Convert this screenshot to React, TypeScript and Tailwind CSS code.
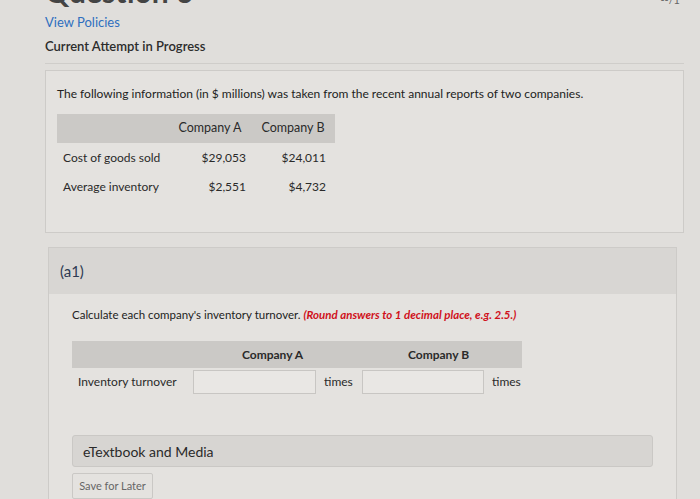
export default function App() {
  return (
    <div className="w-[700px] h-[499px] overflow-hidden bg-[#e0dedb] font-['Lato',sans-serif] text-[#333]">
      <div className="h-[7px] overflow-hidden flex justify-between pl-[45px] pr-[20px]">
        <div className="-mt-[27px] text-[30px] leading-[36px] font-bold text-[#444]">Question 6</div>
        <div className="-mt-[7px] text-[11px] leading-[14px] text-[#666]">--/1</div>
      </div>
      <div className="pl-[45px] pr-[16px]">
        <div className="mt-[7px] text-[13px] leading-[16px] text-[#2f6fbf]">View Policies</div>
        <div className="mt-[8px] text-[13px] leading-[16px] font-semibold text-[#2c2c2c]">Current Attempt in Progress</div>
        <div className="mt-[9px] border-t border-[#cfcdca]" />
        <div className="mt-[6px] h-[163px] border border-[#cdcbc8] bg-[#e4e2df] pl-[11px] pt-[15px]">
          <p className="text-[12px] leading-[16px] text-[#222]">
            The following information (in $ millions) was taken from the recent annual reports of two companies.
          </p>
          <div className="mt-[12px] w-[278px] text-[12px] text-[#2a2a2a]">
            <div className="flex h-[29px] items-center bg-[#cbc9c6] text-[12.5px]">
              <div className="w-[112px]" />
              <div className="w-[82px] text-center">Company A</div>
              <div className="w-[84px] text-center">Company B</div>
            </div>
            <div className="flex h-[29px] items-center">
              <div className="w-[112px] pl-[6px]">Cost of goods sold</div>
              <div className="w-[82px] pr-[5px] text-right">$29,053</div>
              <div className="w-[84px] pr-[9px] text-right">$24,011</div>
            </div>
            <div className="flex h-[29px] items-center">
              <div className="w-[112px] pl-[6px]">Average inventory</div>
              <div className="w-[82px] pr-[5px] text-right">$2,551</div>
              <div className="w-[84px] pr-[9px] text-right">$4,732</div>
            </div>
          </div>
        </div>
        <div className="mt-[14px] ml-[3px] mr-[7px] border border-[#cdcbc8] bg-[#e4e2df]">
          <div className="flex h-[46px] items-center bg-[#d8d6d3] pl-[11px] text-[15px] text-[#2d3a52]">(a1)</div>
          <div className="pl-[23px] pt-[13px]">
            <p className="text-[11.5px] leading-[16px] text-[#222]">
              Calculate each company's inventory turnover.{' '}
              <span className="font-bold italic text-[#d0111b]">(Round answers to 1 decimal place, e.g. 2.5.)</span>
            </p>
            <div className="mt-[18px] w-[450px] text-[12px] text-[#2a2a2a]">
              <div className="flex h-[27px] items-center bg-[#cbc9c6] font-bold">
                <div className="w-[118px]" />
                <div className="w-[165px] text-center">Company A</div>
                <div className="w-[167px] text-center">Company B</div>
              </div>
              <div className="flex h-[28px] items-center">
                <div className="w-[118px] pl-[6px]">Inventory turnover</div>
                <div className="flex w-[165px] items-center pl-[3px]">
                  <div className="h-[24px] w-[123px] border border-[#c8c6c3] bg-[#e9e7e4]" />
                  <span className="ml-[8px]">times</span>
                </div>
                <div className="flex w-[167px] items-center pl-[7px]">
                  <div className="h-[24px] w-[122px] border border-[#c8c6c3] bg-[#e9e7e4]" />
                  <span className="ml-[8px]">times</span>
                </div>
              </div>
            </div>
            <div className="mt-[39px] mr-[23px] flex h-[32px] items-center rounded-[3px] border border-[#cac8c5] bg-[#d7d5d2] pl-[10px] text-[14px] text-[#2a2a2a]">
              eTextbook and Media
            </div>
            <div className="mt-[6px] flex h-[26px] w-[81px] items-center justify-center rounded-[2px] border border-[#cac8c5] text-[11px] text-[#666]">
              Save for Later
            </div>
          </div>
        </div>
      </div>
    </div>
  );
}
